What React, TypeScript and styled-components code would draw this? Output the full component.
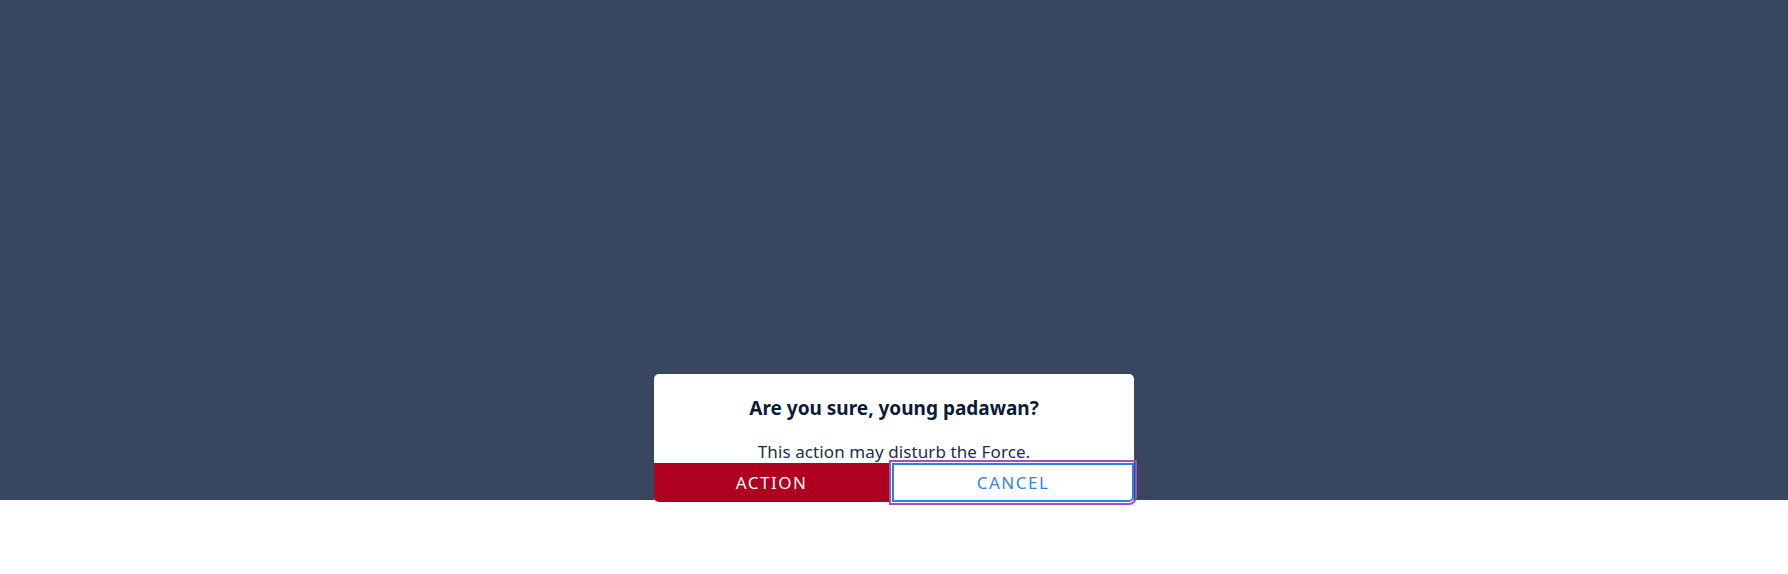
import React from "react";
import styled, { createGlobalStyle } from "styled-components";

const GlobalStyle = createGlobalStyle`
  html, body {
    margin: 0;
    padding: 0;
    background: #ffffff;
    font-family: "Noto Sans", "Open Sans", Arial, sans-serif;
  }
`;

const Page = styled.div`
  min-height: 100vh;
  background: #ffffff;
`;

const Stage = styled.div`
  height: 500px;
  background-color: #36475f;
  display: flex;
  justify-content: center;
  align-items: flex-start;
`;

const Dialog = styled.div`
  position: relative;
  z-index: 1;
  margin-top: 374px;
  width: 480px;
  flex-shrink: 0;
  background: #ffffff;
  border-radius: 5px;
  display: flex;
  flex-direction: column;
  align-items: stretch;
`;

const Title = styled.h2`
  margin: 21px 0 0;
  font-size: 19px;
  font-weight: 700;
  line-height: 26px;
  letter-spacing: 0;
  color: #0b1a38;
  text-align: center;
`;

const Message = styled.p`
  margin: 19px 0 0;
  font-size: 17px;
  line-height: 23px;
  letter-spacing: 0.1px;
  color: #1f2c47;
  text-align: center;
`;

const Actions = styled.div`
  display: grid;
  grid-template-columns: 235px 1fr;
  grid-template-rows: 39px;
  column-gap: 3px;
`;

const Button = styled.button<{ variant: "action" | "cancel" }>`
  height: 39px;
  margin: 0;
  padding: 0;
  box-sizing: border-box;
  font-family: inherit;
  font-size: 17px;
  letter-spacing: 1.5px;
  text-transform: uppercase;
  cursor: pointer;
  background-color: ${(props) =>
    props.variant === "action" ? "#b0001f" : "#ffffff"};
  color: ${(props) => (props.variant === "action" ? "#ffffff" : "#3583e4")};
  border: ${(props) =>
    props.variant === "action" ? "0" : "2px solid #2f7fe2"};
  border-radius: ${(props) =>
    props.variant === "action" ? "0 0 0 5px" : "0 0 5px 0"};
  outline: ${(props) =>
    props.variant === "cancel" ? "2px solid #9c4fc6" : "none"};
  outline-offset: 1px;
`;

export default function App() {
  return (
    <Page>
      <GlobalStyle />
      <Stage>
        <Dialog role="alertdialog">
          <Title>Are you sure, young padawan?</Title>
          <Message>This action may disturb the Force.</Message>
          <Actions>
            <Button variant="action">Action</Button>
            <Button variant="cancel">Cancel</Button>
          </Actions>
        </Dialog>
      </Stage>
    </Page>
  );
}
